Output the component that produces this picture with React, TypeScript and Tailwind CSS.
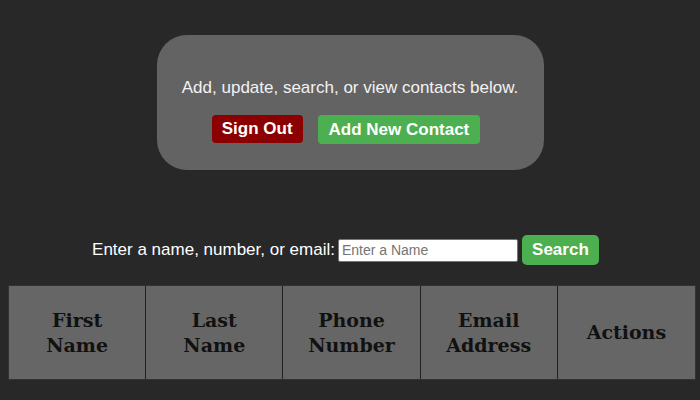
import React from "react";

const headers = [
  ["First", "Name"],
  ["Last", "Name"],
  ["Phone", "Number"],
  ["Email", "Address"],
  ["Actions"],
];

export default function App() {
  return (
    <div className="w-[700px] h-[400px] overflow-hidden bg-[#282828] font-['Liberation_Sans',Arial,sans-serif] text-white">
      <div className="flex justify-center pt-[35px]">
        <div className="w-[387px] h-[135px] rounded-[30px] bg-[#636363] flex flex-col items-center pt-[43px]">
          <p className="text-[17px] leading-[20px] text-[#f2f2f2]">
            Add, update, search, or view contacts below.
          </p>
          <div className="flex gap-[15px] mt-[17px] pr-[8px]">
            <button className="h-[28px] px-[10px] rounded-[4px] bg-[#8b0000] text-[17px] font-bold text-white">
              Sign Out
            </button>
            <button className="h-[29px] px-[11px] rounded-[4px] bg-[#4caf50] text-[17px] font-bold text-white">
              Add New Contact
            </button>
          </div>
        </div>
      </div>

      <div className="flex justify-center items-center mt-[65px] pr-[9px]">
        <span className="text-[17px] mr-[3px]">Enter a name, number, or email:</span>
        <input
          placeholder="Enter a Name"
          className="w-[180px] h-[23px] bg-white border border-[#767676] rounded-[2px] px-[3px] text-[14px] text-black placeholder:text-[#757575] outline-none"
        />
        <button className="ml-[4px] h-[30px] w-[77px] rounded-[5px] bg-[#4caf50] text-[17px] font-bold text-white">
          Search
        </button>
      </div>

      <div className="ml-[8px] w-[688px] mt-[20px] grid grid-cols-5 border border-[#333] bg-[#666]">
        {headers.map((h, i) => (
          <div
            key={i}
            className={`h-[93px] flex flex-col items-center justify-center font-['DejaVu_Serif',serif] font-bold text-[19px] leading-[25px] text-[#111] ${
              i < 4 ? "border-r border-[#222]" : ""
            }`}
          >
            {h.map((w) => (
              <span key={w}>{w}</span>
            ))}
          </div>
        ))}
      </div>
    </div>
  );
}
